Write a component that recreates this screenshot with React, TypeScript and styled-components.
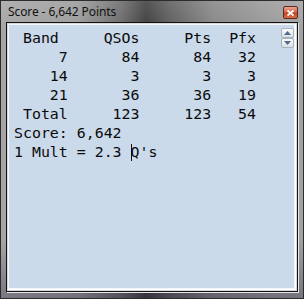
import React from "react";
import styled, { createGlobalStyle } from "styled-components";

const Global = createGlobalStyle`
  html, body { margin: 0; padding: 0; background: #000; }
  body { width: 304px; height: 299px; overflow: hidden; }
`;

const Window = styled.div`
  box-sizing: border-box;
  width: 304px;
  height: 299px;
  display: flex;
  flex-direction: column;
  border: 1px solid #2c2c2c;
  background:
    linear-gradient(180deg, rgba(255,255,255,0.12) 0%, rgba(255,255,255,0) 10%, rgba(0,0,0,0) 80%, rgba(40,30,60,0.35) 100%),
    linear-gradient(90deg, #a6a6a6 0%, #9c9c9c 25%, #6a6a6a 40%, #3f3f3f 48%, #5e5e5e 56%, #868686 70%, #9a9a9a 88%, #a2a2a2 100%);
`;

const TitleBar = styled.div`
  height: 21px;
  display: flex;
  align-items: center;
  justify-content: space-between;
  padding: 0 5px 0 7px;
`;

const Title = styled.span`
  font-family: "Noto Sans", "Open Sans", sans-serif;
  font-size: 12px;
  color: #111;
  letter-spacing: -0.1px;
  margin-top: -1px;
`;

const CloseButton = styled.div`
  width: 15px;
  height: 13px;
  margin-top: 2px;
  border: 1px solid #5a2a22;
  border-radius: 2px;
  box-sizing: border-box;
  background: linear-gradient(180deg, #e8a38f 0%, #d66a4e 45%, #c2401f 55%, #d6704f 100%);
  display: flex;
  align-items: center;
  justify-content: center;
`;

const Client = styled.div`
  flex: 1;
  margin: 0 5px 6px 5px;
  border: 1px solid #111;
  box-shadow: 0 0 0 1px #d8d8d8 inset, 1px 1px 0 0 #e8e8e8;
  padding: 1px 2px 2px 1px;
  background: #fff;
  display: flex;
`;

const Editor = styled.div`
  flex: 1;
  display: flex;
  background: #cbdaea;
  border: 1px solid #f2f6fa;
`;

const TextPane = styled.pre`
  flex: 1;
  margin: 0;
  padding: 4px 0 0 5px;
  font-family: "DejaVu Sans Mono", "Liberation Mono", monospace;
  font-size: 14.9px;
  line-height: 19px;
  color: #0a0a0a;
`;

const Caret = styled.span`
  display: inline-block;
  width: 1px;
  height: 17px;
  margin: 0 -1px -4px 0;
  background: #111;
`;

const SpinColumn = styled.div`
  width: 13px;
  padding-top: 3px;
  display: flex;
  flex-direction: column;
`;

const SpinButton = styled.div`
  height: 10px;
  box-sizing: border-box;
  border: 1px solid #a9b3bf;
  border-radius: 2px;
  background: linear-gradient(180deg, #fbfbfb 0%, #eceef0 50%, #dcdfe3 100%);
  display: flex;
  align-items: center;
  justify-content: center;
`;

const Arrow = ({ up }: { up?: boolean }) => (
  <svg width="7" height="4" viewBox="0 0 7 4">
    <path d={up ? "M0 4 L3.5 0 L7 4 Z" : "M0 0 L3.5 4 L7 0 Z"} fill="#4e6a92" />
  </svg>
);

const lines = [
  " Band     QSOs     Pts  Pfx",
  "     7      84      84   32",
  "    14       3       3    3",
  "    21      36      36   19",
  " Total     123     123   54",
  "Score: 6,642",
];

export default function App() {
  return (
    <>
      <Global />
      <Window>
        <TitleBar>
          <Title>Score - 6,642 Points</Title>
          <CloseButton>
            <svg width="7" height="6" viewBox="0 0 7 6">
              <path d="M0.5 0.5 L6.5 5.5 M6.5 0.5 L0.5 5.5" stroke="#fff" strokeWidth="1.8" />
            </svg>
          </CloseButton>
        </TitleBar>
        <Client>
          <Editor>
            <TextPane>
              {lines.join("\n")}
              {"\n1 Mult = 2.3 "}
              <Caret />
              {"Q's"}
            </TextPane>
            <SpinColumn>
              <SpinButton><Arrow up /></SpinButton>
              <SpinButton><Arrow /></SpinButton>
            </SpinColumn>
          </Editor>
        </Client>
      </Window>
    </>
  );
}
